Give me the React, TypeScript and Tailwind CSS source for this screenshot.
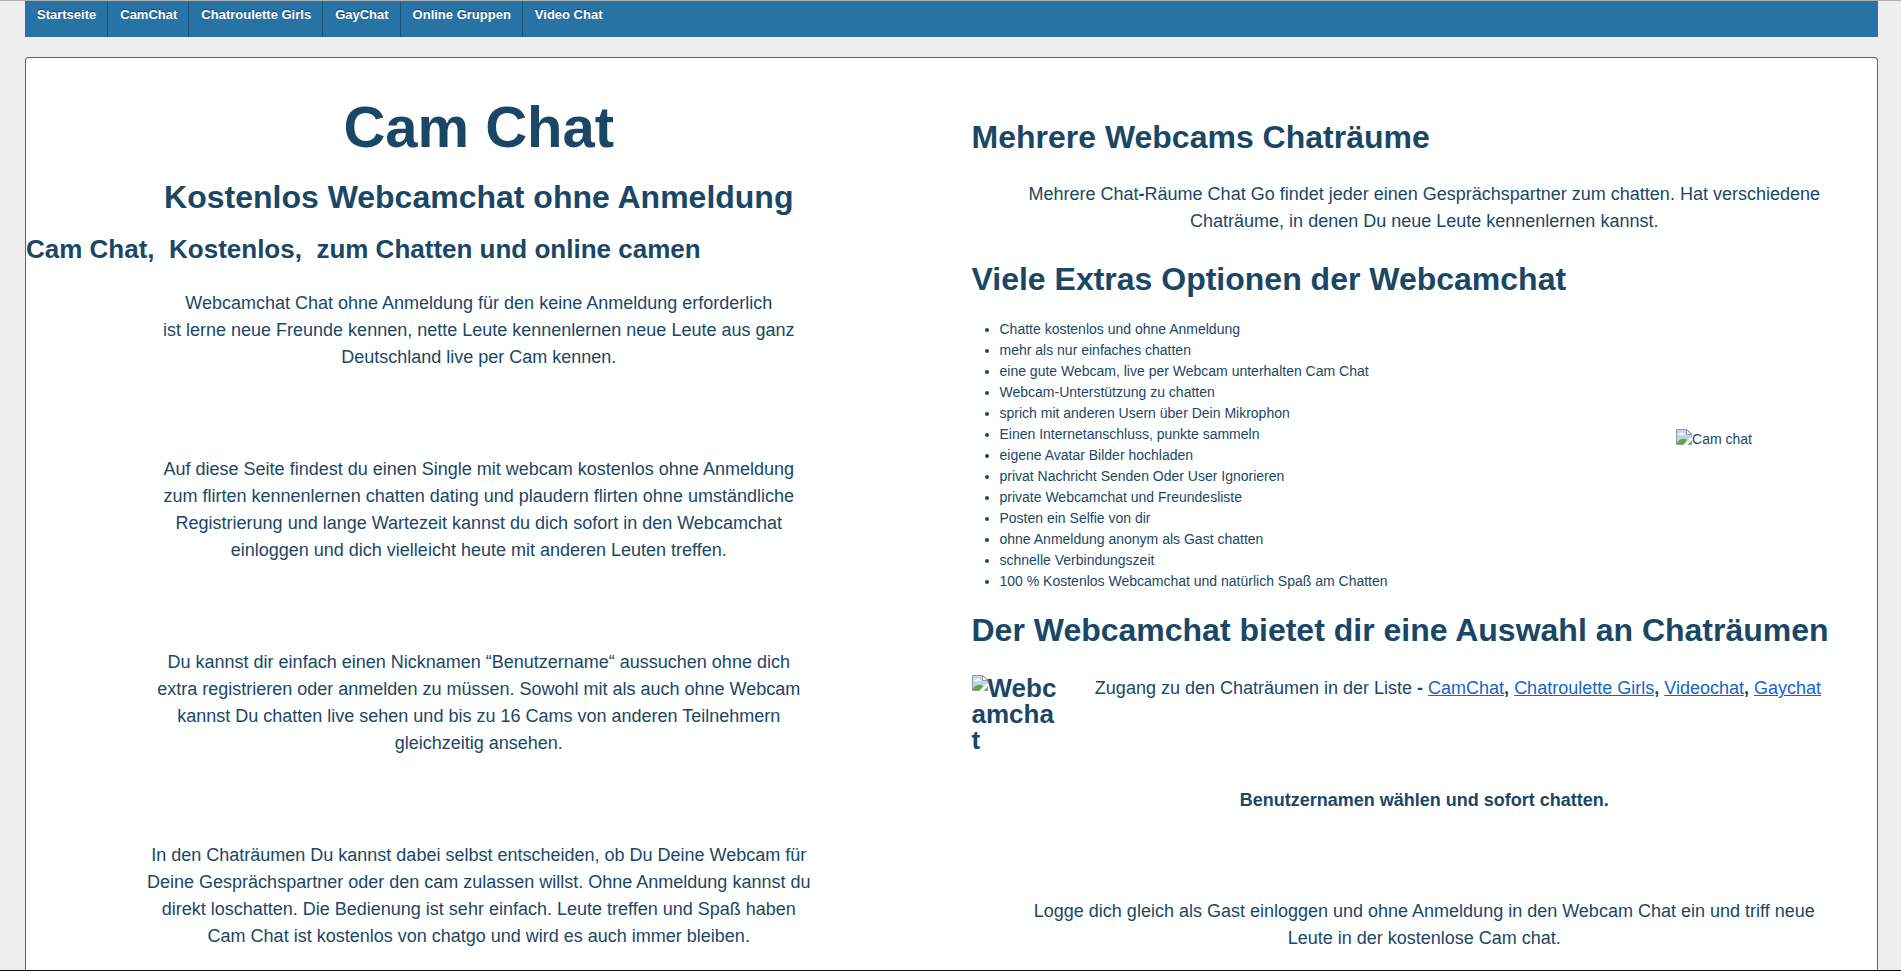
import type { ReactNode } from "react"

const menu = ["Startseite", "CamChat", "Chatroulette Girls", "GayChat", "Online Gruppen", "Video Chat"]

const extras = [
    "Chatte kostenlos und ohne Anmeldung",
    "mehr als nur einfaches chatten",
    "eine gute Webcam, live per Webcam unterhalten Cam Chat",
    "Webcam-Unterstützung zu chatten",
    "sprich mit anderen Usern über Dein Mikrophon",
    "Einen Internetanschluss, punkte sammeln",
    "eigene Avatar Bilder hochladen",
    "privat Nachricht Senden Oder User Ignorieren",
    "private Webcamchat und Freundesliste",
    "Posten ein Selfie von dir",
    "ohne Anmeldung anonym als Gast chatten",
    "schnelle Verbindungszeit",
    "100 % Kostenlos Webcamchat und natürlich Spaß am Chatten",
]

const rooms = ["CamChat", "Chatroulette Girls", "Videochat", "Gaychat"]

function BrokenImage() {
    return (
        <svg width="16" height="16" viewBox="0 0 16 16" className="inline-block align-top" aria-hidden="true">
            <path d="M0.5 0.5H11L15.5 5V15.5H0.5Z" fill="#c3d5f7" stroke="#9a9a9a" />
            <path d="M2 6C2 4.600 3.500 4.200 4.200 4.500C4.700 3 7 3 7.400 4.500C8.600 4.400 9 5.300 8.800 6Z" fill="#fff" />
            <path d="M1 15V13.500C3 10.500 8 8.500 11 11L8 15Z" fill="#5aac36" />
            <path d="M12 15L15 12.500V15Z" fill="#5aac36" />
            <path d="M7.500 16L16 7.500V11L11.500 16Z" fill="#fff" />
            <path d="M10.500 0.500V5.500H15.500Z" fill="#fff" stroke="#9a9a9a" />
        </svg>
    )
}

function Heading({ children }: { children: ReactNode }) {
    return <h2 className="text-[32px] leading-10 font-bold">{children}</h2>
}

export default function App() {
    return (
        <div className="flex h-screen flex-col overflow-hidden border-t border-b border-t-[#b0b0b0] border-b-[#0b0f18] bg-[#eeeeee] pr-[23px] pl-[25px] font-['Liberation_Sans',Arial,sans-serif] text-sm text-[#1b4766]">

            {/* Menu */}
            <nav className="flex h-9 shrink-0 bg-[#2773a6]">
                {menu.map(item => (
                    <a
                        key={item}
                        href="#"
                        className="border-r border-[#1c5379] pt-1 pr-[11px] pl-3 text-[13px] leading-5 font-bold text-white last:border-r-0 [text-shadow:0_-1px_0_#17405e]"
                    >
                        {item}
                    </a>
                ))}
            </nav>

            <main className="mt-5 grid flex-1 grid-cols-2 gap-x-10 rounded-t border border-b-0 border-[#2773a6] bg-white">

                {/* Left column */}
                <section>
                    <h1 className="mt-8 text-center text-[58px] leading-[74px] font-bold">Cam Chat</h1>
                    <h2 className="mt-[13px] text-center text-[32px] leading-10 font-bold">Kostenlos Webcamchat ohne Anmeldung</h2>
                    <h3 className="mt-4 text-[26px] leading-8 font-bold">
                        Cam Chat,&nbsp; Kostenlos,&nbsp; zum Chatten und online camen
                    </h3>
                    <div className="mt-[25px] flex flex-col gap-[85px] px-[120px] text-center text-lg leading-[27px]">
                        <p>
                            Webcamchat Chat ohne Anmeldung für den keine Anmeldung erforderlich
                            <br />
                            ist lerne neue Freunde kennen, nette Leute kennenlernen neue Leute aus ganz
                            Deutschland live per Cam kennen.
                        </p>
                        <p>
                            Auf diese Seite findest du einen Single mit webcam kostenlos ohne Anmeldung
                            zum flirten kennenlernen chatten dating und plaudern flirten ohne umständliche
                            Registrierung und lange Wartezeit kannst du dich sofort in den Webcamchat
                            einloggen und dich vielleicht heute mit anderen Leuten treffen.
                        </p>
                        <p>
                            Du kannst dir einfach einen Nicknamen “Benutzername“ aussuchen ohne dich
                            extra registrieren oder anmelden zu müssen. Sowohl mit als auch ohne Webcam
                            kannst Du chatten live sehen und bis zu 16 Cams von anderen Teilnehmern
                            gleichzeitig ansehen.
                        </p>
                        <p>
                            In den Chaträumen Du kannst dabei selbst entscheiden, ob Du Deine Webcam für
                            Deine Gesprächspartner oder den cam zulassen willst. Ohne Anmeldung kannst du
                            direkt loschatten. Die Bedienung ist sehr einfach. Leute treffen und Spaß haben
                            Cam Chat ist kostenlos von chatgo und wird es auch immer bleiben.
                        </p>
                    </div>
                </section>

                {/* Right column */}
                <section className="pt-[59px]">
                    <Heading>Mehrere Webcams Chaträume</Heading>
                    <p className="mt-6 mb-6 px-14 text-center text-lg leading-[27px]">
                        Mehrere Chat<b>-</b>Räume Chat Go findet jeder einen Gesprächspartner zum chatten. Hat verschiedene
                        Chaträume, in denen Du neue Leute kennenlernen kannst.
                    </p>

                    <Heading>Viele Extras Optionen der Webcamchat</Heading>
                    <div className="mt-5 mb-[18px] flex justify-between">
                        <ul className="list-disc pl-7 leading-[21px]">
                            {extras.map(item => <li key={item}>{item}</li>)}
                        </ul>
                        <div role="img" aria-label="Cam chat" className="mt-[110px] mr-[125px] leading-5">
                            <BrokenImage />Cam chat
                        </div>
                    </div>

                    <Heading>Der Webcamchat bietet dir eine Auswahl an Chaträumen</Heading>
                    <div className="mt-[25px] flex justify-between pr-14">
                        <div role="img" aria-label="Webcamchat" className="w-[88px] text-[26px] leading-[26px] font-bold break-all">
                            <BrokenImage />Webcamchat
                        </div>
                        <p className="text-lg leading-[27px]">
                            Zugang zu den Chaträumen in der Liste <b>-</b>{" "}
                            {rooms.map((room, i) => (
                                <span key={room}>
                                    {i > 0 && <b>, </b>}
                                    <a href="#" className="text-[#1565c8] underline">{room}</a>
                                </span>
                            ))}
                        </p>
                    </div>

                    <div className="mt-[34px] flex flex-col gap-[84px] px-14 text-center text-lg leading-[27px]">
                        <p className="font-bold">Benutzernamen wählen und sofort chatten.</p>
                        <p>
                            Logge dich gleich als Gast einloggen und ohne Anmeldung in den Webcam Chat ein und triff neue
                            Leute in der kostenlose Cam chat.
                        </p>
                    </div>
                </section>
            </main>
        </div>
    )
}
